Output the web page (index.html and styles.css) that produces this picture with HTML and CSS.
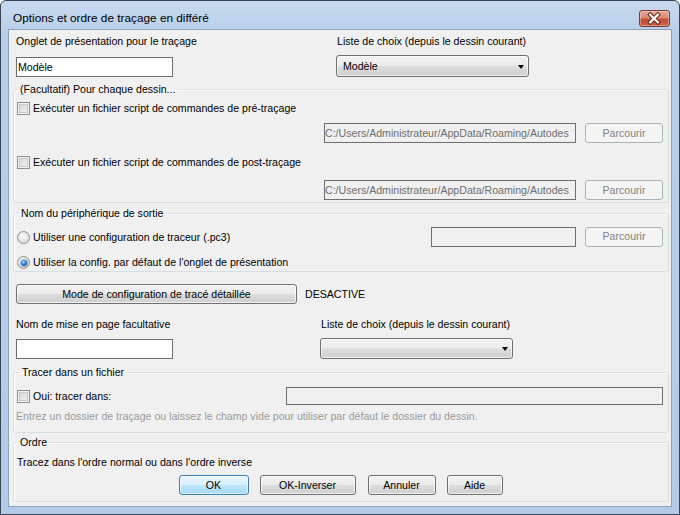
FILE: index.html
```html
<!DOCTYPE html>
<html lang="fr">
<head>
<meta charset="utf-8">
<title>Options et ordre de traçage en différé</title>
<link rel="stylesheet" href="styles.css">
</head>
<body>
<div class="window">
  <div class="titlebar">
    <span class="title">Options et ordre de traçage en différé</span>
    <span class="close" aria-label="Fermer">
      <svg width="31" height="17" viewBox="0 0 31 17">
        <path d="M11.5 4.5 L19.5 12.5 M19.5 4.5 L11.5 12.5" stroke="#5a2014" stroke-width="4.2" stroke-linecap="square" fill="none"/>
        <path d="M11.5 4.5 L19.5 12.5 M19.5 4.5 L11.5 12.5" stroke="#ffffff" stroke-width="2.2" stroke-linecap="square" fill="none"/>
      </svg>
    </span>
  </div>
  <div class="client">
    <div class="row labels r1">
      <span class="cell w320">Onglet de présentation pour le traçage</span>
      <span class="cell">Liste de choix (depuis le dessin courant)</span>
    </div>
    <div class="row fields f1">
      <div class="cell w320"><div class="textbox tb-name">Modèle</div></div>
      <div class="select sel-w1"><span class="sel-text">Modèle</span><span class="arrow"></span></div>
    </div>

    <fieldset class="group g1">
      <legend>(Facultatif) Pour chaque dessin...</legend>
      <div class="line check c1"><span class="cb"></span><span>Exécuter un fichier script de commandes de pré-traçage</span></div>
      <div class="line pathrow p1">
        <div class="textbox disabled path">C:/Users/Administrateur/AppData/Roaming/Autodes</div>
        <span class="btn disabled browse">Parcourir</span>
      </div>
      <div class="line check c2"><span class="cb"></span><span>Exécuter un fichier script de commandes de post-traçage</span></div>
      <div class="line pathrow p2">
        <div class="textbox disabled path">C:/Users/Administrateur/AppData/Roaming/Autodes</div>
        <span class="btn disabled browse">Parcourir</span>
      </div>
    </fieldset>

    <fieldset class="group g2">
      <legend>Nom du périphérique de sortie</legend>
      <div class="line radio rr1">
        <span class="rb"></span><span>Utiliser une configuration de traceur (.pc3)</span>
        <div class="textbox disabled pc3"></div>
        <span class="btn disabled browse">Parcourir</span>
      </div>
      <div class="line radio rr2">
        <span class="rb on"></span><span>Utiliser la config. par défaut de l'onglet de présentation</span>
      </div>
    </fieldset>

    <div class="row moderow">
      <span class="btn mode">Mode de configuration de tracé détaillée</span>
      <span class="status">DESACTIVE</span>
    </div>

    <div class="row labels r2">
      <span class="cell w304">Nom de mise en page facultative</span>
      <span class="cell">Liste de choix (depuis le dessin courant)</span>
    </div>
    <div class="row fields f2">
      <div class="cell w304"><div class="textbox tb-name"></div></div>
      <div class="select sel-w1 sel2"><span class="sel-text"></span><span class="arrow"></span></div>
    </div>

    <fieldset class="group g3">
      <legend>Tracer dans un fichier</legend>
      <div class="line check c3">
        <span class="cb"></span><span>Oui: tracer dans:</span>
        <div class="textbox disabled outfile"></div>
      </div>
      <div class="hint">Entrez un dossier de traçage ou laissez le champ vide pour utiliser par défaut le dossier du dessin.</div>
    </fieldset>

    <fieldset class="group g4">
      <legend>Ordre</legend>
      <div class="ordertext">Tracez dans l'ordre normal ou dans l'ordre inverse</div>
      <div class="buttons">
        <span class="btn default b-ok">OK</span>
        <span class="btn b-inv">OK-Inverser</span>
        <span class="btn b-cancel">Annuler</span>
        <span class="btn b-help">Aide</span>
      </div>
    </fieldset>
  </div>
</div>
</body>
</html>
```

FILE: styles.css
```css
* { box-sizing: border-box; }
html, body { margin: 0; padding: 0; }
body {
  width: 680px;
  height: 515px;
  background: #ffffff;
  font-family: "Liberation Sans", Arial, sans-serif;
  font-size: 10.6px;
  color: #000;
  overflow: hidden;
}

.window {
  width: 680px;
  height: 515px;
  border: 1px solid #3b4350;
  border-radius: 6px 6px 0 0;
  background: linear-gradient(to bottom, #c8daef 0px, #b9cfea 30px, #b3cbe8 100%);
  padding: 0 7px 7px 7px;
  display: flex;
  flex-direction: column;
}

.titlebar {
  height: 28px;
  display: flex;
  align-items: flex-start;
  justify-content: space-between;
  flex: none;
}
.title {
  font-size: 11.8px;
  line-height: 15px;
  margin-top: 10px;
  margin-left: 5px;
  color: #000;
}
.close {
  width: 31px;
  height: 17px;
  margin-top: 9px;
  margin-right: 2px;
  border: 1px solid #7a3a30;
  border-radius: 3px;
  background: linear-gradient(to bottom, #e8a996 0%, #d98a76 45%, #c54d36 55%, #c9604a 100%);
  box-shadow: inset 0 0 0 1px rgba(255,255,255,0.35);
  display: flex;
}
.close svg { display: block; margin: -1px 0 0 -1px; }

.client {
  flex: 1;
  border: 1px solid #8ea2bb;
  background: #f0f0f0;
  padding: 5px 2px 0 4px;
  display: flex;
  flex-direction: column;
}

.row { display: flex; align-items: center; margin-left: 3px; }
.labels { height: 13px; line-height: 13px; }
.cell { flex: none; }
.w320 { width: 320px; }
.w304 { width: 304px; }
.r1 .cell + .cell { padding-left: 1px; }
.r2 .cell + .cell { padding-left: 1px; }

.f1 { margin-top: 7px; height: 22px; }
.f2 { margin-top: 7px; height: 21px; }

.textbox {
  border: 1px solid #6f6f6f;
  background: #fff;
  height: 20px;
  line-height: 18px;
  padding: 0 1px;
  white-space: nowrap;
  overflow: hidden;
}
.textbox.disabled { background: #f0f0f0; color: #6d6d6d; padding: 0; }
.tb-name { width: 157px; margin-top: 1px; }

.select {
  height: 22px;
  border: 1px solid #707070;
  border-radius: 3px;
  background: linear-gradient(to bottom, #f2f2f2 0%, #ebebeb 48%, #dddddd 52%, #cfcfcf 100%);
  box-shadow: inset 0 0 0 1px rgba(255,255,255,0.7);
  display: flex;
  align-items: center;
  justify-content: space-between;
  padding: 0 4px 0 6px;
}
.sel-w1 { width: 193px; }
.sel2 { height: 21px; }
.arrow {
  width: 0;
  height: 0;
  border-left: 3.5px solid transparent;
  border-right: 3.5px solid transparent;
  border-top: 4px solid #000;
  margin-top: 1px;
}

.group {
  margin: 0;
  border: 1px solid #d5dfe5;
  border-radius: 3px;
  padding: 0 5px 0 3px;
  box-shadow: inset 1px 1px 0 #ffffff;
  min-width: 0;
}
.group legend {
  padding: 0 2px;
  margin-left: 1px;
  line-height: 13px;
  height: 13px;
}
.g1 { margin-top: 6px; padding-bottom: 2px; }
.g2 { margin-top: 4px; padding-bottom: 2px; }
.g3 { margin-top: 7px; padding-bottom: 9px; }
.g4 { margin-top: 3px; padding-bottom: 6px; }
.g2 legend { margin-left: 2px; }
.g3 legend { margin-left: 3px; }

.line { display: flex; align-items: center; }
.check, .radio { line-height: 13px; }
.c1 { margin-top: 6px; height: 13px; }
.c2 { margin-top: 13px; height: 13px; }
.c3 { margin-top: 8px; height: 18px; }

.pathrow { justify-content: flex-end; height: 20px; }
.p1 { margin-top: 8px; }
.p2 { margin-top: 11px; }
.path { width: 252px; margin-right: 9px; }

.cb {
  width: 13px;
  height: 13px;
  flex: none;
  border: 1px solid #8e8f8f;
  background: linear-gradient(135deg, #cdd0d4 0%, #e6e7e9 60%, #f6f6f6 100%);
  box-shadow: inset 0 0 0 1px #f4f4f4, inset 0 0 0 2px #c4c7cb;
  margin-right: 3px;
}
.rb {
  width: 13px;
  height: 13px;
  flex: none;
  border-radius: 50%;
  border: 1px solid #8e8f8f;
  background: radial-gradient(circle at 45% 40%, #f8f8f8 0%, #e3e4e6 55%, #c9cbce 100%);
  margin-right: 3px;
  display: flex;
  align-items: center;
  justify-content: center;
}
.rb.on::after {
  content: "";
  width: 6px;
  height: 6px;
  border-radius: 50%;
  background: radial-gradient(circle at 40% 35%, #9fdcff 0%, #2a7fcf 45%, #0b3f7a 100%);
  box-shadow: 0 0 0 1px rgba(30,70,120,0.35);
}
.rr1 { margin-top: 7px; height: 20px; }
.rr2 { margin-top: 9px; height: 13px; }
.pc3 { width: 145px; margin-left: auto; margin-right: 9px; height: 20px; }
.rr1 .browse { height: 20px; margin-top: -1px; }

.btn {
  display: flex;
  align-items: center;
  justify-content: center;
  height: 20px;
  border: 1px solid #707070;
  border-radius: 3px;
  background: linear-gradient(to bottom, #f2f2f2 0%, #ebebeb 48%, #dddddd 52%, #cfcfcf 100%);
  box-shadow: inset 0 0 0 1px rgba(255,255,255,0.7);
  flex: none;
  line-height: 13px;
}
.btn.disabled {
  border-color: #adb2b5;
  background: #f4f4f4;
  box-shadow: none;
  color: #838383;
}
.browse { width: 78px; }
.btn.default {
  border-color: #3c7fb1;
  background: linear-gradient(to bottom, #eaf6fd 0%, #d9f0fc 48%, #bee6fd 52%, #a7d9f5 100%);
  box-shadow: inset 0 0 0 1px rgba(255,255,255,0.6);
}

.moderow { margin-top: 12px; height: 20px; }
.mode { width: 281px; }
.status { margin-left: 8px; line-height: 13px; }

.r2 { margin-top: 14px; }

.outfile { width: 377px; height: 18px; margin-left: auto; }
.hint { margin-top: 5px; line-height: 13px; height: 13px; color: #9a9a9a; margin-left: -1px; white-space: nowrap; }

.ordertext { margin-top: 7px; line-height: 13px; height: 13px; }
.buttons {
  margin-top: 6px;
  display: flex;
  justify-content: center;
  gap: 11px;
  padding-left: 1px;
}
.b-ok { width: 70px; }
.b-inv { width: 96px; margin-right: 1px; }
.b-cancel { width: 68px; }
.b-help { width: 56px; }
```
